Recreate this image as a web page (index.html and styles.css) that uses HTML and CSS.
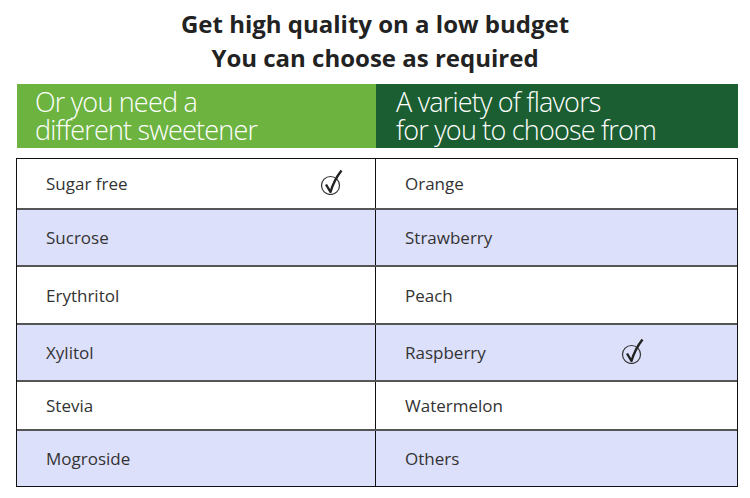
FILE: index.html
```html
<!DOCTYPE html>
<html>
<head>
<meta charset="utf-8">
<link rel="stylesheet" href="styles.css">
</head>
<body>
<div class="page">
  <h1 class="title">Get high quality on a low budget<br>You can choose as required</h1>
  <div class="heads">
    <div class="head head-light">Or you need a<br>different sweetener</div>
    <div class="head head-dark">A variety of flavors<br>for you to choose from</div>
  </div>
  <div class="table">
    <div class="row r1">
      <div class="cell left"><span>Sugar free</span>
        <svg class="check check-left" viewBox="0 0 24 26" width="24" height="26"><circle cx="10.5" cy="16.5" r="9" fill="none" stroke="#333" stroke-width="1.2"/><path d="M6 15.5 L10.5 23 Q14 11 21.5 1.5" fill="none" stroke="#222" stroke-width="2.4" stroke-linejoin="round"/></svg>
      </div>
      <div class="cell right"><span>Orange</span></div>
    </div>
    <div class="row r2 alt">
      <div class="cell left"><span>Sucrose</span></div>
      <div class="cell right"><span>Strawberry</span></div>
    </div>
    <div class="row r3">
      <div class="cell left"><span>Erythritol</span></div>
      <div class="cell right"><span>Peach</span></div>
    </div>
    <div class="row r4 alt">
      <div class="cell left"><span>Xylitol</span></div>
      <div class="cell right"><span>Raspberry</span>
        <svg class="check check-right" viewBox="0 0 24 26" width="24" height="26"><circle cx="10.5" cy="16.5" r="9" fill="none" stroke="#333" stroke-width="1.2"/><path d="M6 15.5 L10.5 23 Q14 11 21.5 1.5" fill="none" stroke="#222" stroke-width="2.4" stroke-linejoin="round"/></svg>
      </div>
    </div>
    <div class="row r5">
      <div class="cell left"><span>Stevia</span></div>
      <div class="cell right"><span>Watermelon</span></div>
    </div>
    <div class="row r6 alt">
      <div class="cell left"><span>Mogroside</span></div>
      <div class="cell right"><span>Others</span></div>
    </div>
  </div>
</div>
</body>
</html>
```
FILE: styles.css
```css
html, body {
  margin: 0;
  padding: 0;
  background: #ffffff;
}
.page {
  width: 750px;
  height: 498px;
  overflow: hidden;
  font-family: "Open Sans", "Noto Sans", sans-serif;
}
.title {
  margin: 0;
  padding-top: 7px;
  height: 84px;
  box-sizing: border-box;
  text-align: center;
  font-size: 24px;
  line-height: 34px;
  font-weight: 700;
  color: #222;
  letter-spacing: 0;
}
.heads {
  display: flex;
  margin-left: 17px;
  width: 721px;
  height: 64px;
}
.head {
  box-sizing: border-box;
  height: 64px;
  color: #fff;
  font-size: 27px;
  line-height: 28px;
  font-weight: 300;
  letter-spacing: -0.8px;
  padding-top: 4px;
}
.head-light {
  width: 359px;
  background: #6cb33f;
  padding-left: 18px;
}
.head-dark {
  width: 362px;
  background: #1b5e31;
  padding-left: 20px;
}
.table {
  margin-top: 10px;
  margin-left: 16px;
  width: 722px;
  box-sizing: border-box;
  border: 1.5px solid #111;
}
.row {
  display: flex;
  box-sizing: border-box;
  background: #fff;
  border-top: 2px solid #555;
}
.row.r1 { border-top: none; height: 49px; }
.row.r2 { height: 57px; }
.row.r3 { height: 58px; }
.row.r4 { height: 57px; }
.row.r5 { height: 49px; }
.row.r6 { height: 57px; }
.row.alt { background: #dde0fb; }
.cell {
  display: flex;
  align-items: center;
  box-sizing: border-box;
  font-size: 17px;
  color: #333;
  letter-spacing: 0;
}
.cell.left {
  width: 359px;
  padding-left: 29px;
  border-right: 1.5px solid #111;
}
.cell.right {
  flex: 1;
  padding-left: 29px;
}
.check {
  margin-left: auto;
  margin-top: -4px;
}
.check-left { margin-right: 31px; }
.check-right { margin-right: 92px; }
```
